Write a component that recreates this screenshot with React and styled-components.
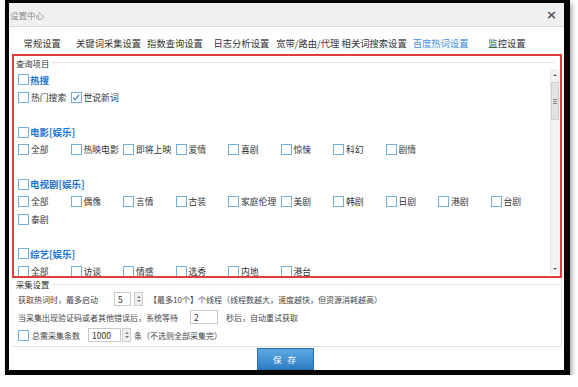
import React from 'react';
import styled, { createGlobalStyle } from 'styled-components';

const FONT = `"Noto Sans CJK SC", "Noto Sans", sans-serif`;

const Global = createGlobalStyle`
  html, body { margin: 0; padding: 0; background: #fff; }
  body { font-family: ${FONT}; color: #333; }
  * { box-sizing: border-box; }
`;

const Dialog = styled.div`
  margin-left: 5px;
  width: 565px;
  height: 375px;
  border-style: solid;
  border-color: #050505;
  border-width: 3px 6px 5px 4px;
  box-shadow: 2px 3px 5px rgba(0, 0, 0, 0.35);
  background: #fff;
  display: flex;
  flex-direction: column;
  overflow: hidden;
`;

const TitleBar = styled.div`
  height: 24px;
  flex: none;
  background: #f0f0f0;
  border-bottom: 1px solid #dcdcdc;
  display: flex;
  align-items: center;
  justify-content: space-between;
  padding: 0 7px 0 1px;
`;

const Title = styled.span`
  font-size: 8.5px;
  color: #888;
`;

const Close = styled.span`
  font-size: 13px;
  font-weight: bold;
  color: #555;
  line-height: 1;
  font-family: "DejaVu Sans", sans-serif;
`;

const TabBar = styled.div`
  height: 27px;
  flex: none;
  display: flex;
  align-items: center;
  padding-top: 4px;
`;

const Tab = styled.div`
  width: 66.4px;
  flex: none;
  text-align: center;
  white-space: nowrap;
  font-size: 9.3px;
  color: ${(p) => (p.$active ? '#3a8ee0' : '#333')};
`;

const RedPanel = styled.div`
  margin-left: 3px;
  width: 550px;
  height: 224px;
  flex: none;
  border: 2px solid #e23b3b;
  display: flex;
  flex-direction: column;
`;

const LegendRow = styled.div`
  height: ${(p) => p.$h}px;
  flex: none;
  display: flex;
  align-items: center;
  padding-left: ${(p) => p.$pl}px;
`;

const LegendText = styled.span`
  font-size: 8.3px;
  color: #333;
  white-space: nowrap;
`;

const LegendLine = styled.div`
  flex: 1;
  height: 1px;
  background: #e4e4e4;
  margin: 0 ${(p) => p.$mr}px 0 3px;
`;

const ScrollRow = styled.div`
  flex: 1;
  min-height: 0;
  display: flex;
  padding-left: 4px;
  padding-right: 1px;
`;

const Content = styled.div`
  flex: 1;
  overflow: hidden;
  padding-top: 2.3px;
`;

const Line = styled.div`
  height: 17.4px;
  display: flex;
  align-items: center;
  flex-wrap: wrap;
`;

const Items = styled.div`
  display: flex;
  flex-wrap: wrap;
`;

const Item = styled.label`
  width: 52.5px;
  height: 17.4px;
  flex: none;
  display: flex;
  align-items: center;
  font-size: 8.8px;
  color: #333;
  white-space: nowrap;
`;

const Box = styled.span`
  width: 11px;
  height: 11px;
  flex: none;
  border: 1px solid #72afdc;
  background: #fff;
  display: inline-flex;
  align-items: center;
  justify-content: center;
  margin-right: ${(p) => p.$mr ?? 2}px;
`;

const GroupTitle = styled.span`
  font-size: 9.5px;
  font-weight: bold;
  color: #2275d2;
  white-space: nowrap;
`;

const Scrollbar = styled.div`
  width: 9px;
  flex: none;
  margin-bottom: 2px;
  background: #f2f2f2;
  border-left: 1px solid #e6e6e6;
  display: flex;
  flex-direction: column;
  align-items: center;
`;

const Arrow = styled.div`
  width: 0;
  height: 0;
  border-left: 2px solid transparent;
  border-right: 2px solid transparent;
  ${(p) =>
    p.$down
      ? 'border-top: 2px solid #666; margin-bottom: 4px;'
      : 'border-bottom: 2px solid #666; margin-top: 5px;'}
`;

const Thumb = styled.div`
  width: 8px;
  height: 38px;
  margin-top: 6px;
  background: #e2e2e2;
  border: 1px solid #cfcfcf;
  display: flex;
  flex-direction: column;
  align-items: center;
  justify-content: center;
  gap: 1px;
`;

const Grip = styled.div`
  width: 4px;
  height: 1px;
  background: #888;
`;

const Spacer = styled.div`
  flex: 1;
`;

const Settings = styled.div`
  margin-left: 3px;
  width: 550px;
  height: 69px;
  flex: none;
  border-right: 1px solid #e6e6e6;
  border-bottom: 1px solid #e2e2e2;
  display: flex;
  flex-direction: column;
`;

const SetRow = styled.div`
  height: 18px;
  flex: none;
  display: flex;
  align-items: center;
  padding-left: 6px;
  font-size: 8px;
  color: #444;
  white-space: nowrap;
`;

const Text = styled.span`
  margin-left: ${(p) => p.$ml || 0}px;
`;

const Input = styled.div`
  width: ${(p) => p.$w}px;
  height: 14px;
  margin-left: ${(p) => p.$ml || 0}px;
  border: 1px solid #c9c9c9;
  background: #fff;
  font-size: 8.5px;
  color: #333;
  padding-left: 3px;
  display: flex;
  align-items: center;
`;

const Spinner = styled.div`
  width: 9px;
  height: 14px;
  margin-left: ${(p) => p.$ml || 0}px;
  border: 1px solid #cfcfcf;
  background: #efefef;
  display: flex;
  flex-direction: column;
  align-items: center;
  justify-content: center;
  gap: 2px;
`;

const Tri = styled.div`
  width: 0;
  height: 0;
  border-left: 2px solid transparent;
  border-right: 2px solid transparent;
  ${(p) => (p.$down ? 'border-top: 2px solid #777;' : 'border-bottom: 2px solid #777;')}
`;

const Footer = styled.div`
  flex: 1;
  display: flex;
  justify-content: center;
  align-items: flex-start;
  padding-top: 1px;
`;

const SaveButton = styled.button`
  width: 57px;
  height: 22px;
  margin-left: -2px;
  border: 1px solid #2b70b2;
  background: linear-gradient(#5ea9e2, #2d7dc4);
  color: #fff;
  font-family: ${FONT};
  font-size: 8.5px;
  letter-spacing: 2px;
  padding: 0;
`;

const Check = () => (
  <svg width="8" height="7" viewBox="0 0 8 7">
    <path d="M1 3.6 L3.1 5.6 L7 1" fill="none" stroke="#3b86cf" strokeWidth="1.2" />
  </svg>
);

const tabs = ['常规设置', '关键词采集设置', '指数查询设置', '日志分析设置', '宽带/路由/代理', '相关词搜索设置', '百度热词设置', '监控设置'];

const groups = [
  { title: '热搜', items: ['热门搜索', '世说新词'], checked: ['世说新词'] },
  { title: '电影[娱乐]', items: ['全部', '热映电影', '即将上映', '爱情', '喜剧', '惊悚', '科幻', '剧情'] },
  { title: '电视剧[娱乐]', items: ['全部', '偶像', '言情', '古装', '家庭伦理', '美剧', '韩剧', '日剧', '港剧', '台剧', '泰剧'] },
  { title: '综艺[娱乐]', items: ['全部', '访谈', '情感', '选秀', '内地', '港台'] },
];

const Spin = ({ ml }) => (
  <Spinner $ml={ml}>
    <Tri />
    <Tri $down />
  </Spinner>
);

export default function App() {
  return (
    <>
      <Global />
      <Dialog>
        <TitleBar>
          <Title>设置中心</Title>
          <Close>×</Close>
        </TitleBar>
        <TabBar>
          {tabs.map((t) => (
            <Tab key={t} $active={t === '百度热词设置'}>{t}</Tab>
          ))}
        </TabBar>
        <RedPanel>
          <LegendRow $h={13} $pl={2}>
            <LegendText>查询项目</LegendText>
            <LegendLine $mr={5} />
          </LegendRow>
          <ScrollRow>
            <Content>
              {groups.map((g, gi) => (
                <React.Fragment key={g.title}>
                  {gi > 0 && <Line />}
                  <Line>
                    <Box $mr={1} />
                    <GroupTitle>{g.title}</GroupTitle>
                  </Line>
                  <Items>
                    {g.items.map((it) => (
                      <Item key={it}>
                        <Box>{g.checked && g.checked.includes(it) && <Check />}</Box>
                        {it}
                      </Item>
                    ))}
                  </Items>
                </React.Fragment>
              ))}
            </Content>
            <Scrollbar>
              <Arrow />
              <Thumb>
                <Grip />
                <Grip />
                <Grip />
              </Thumb>
              <Spacer />
              <Arrow $down />
            </Scrollbar>
          </ScrollRow>
        </RedPanel>
        <Settings>
          <LegendRow $h={12} $pl={4}>
            <LegendText>采集设置</LegendText>
            <LegendLine $mr={0} />
          </LegendRow>
          <SetRow>
            <Text>获取热词时，最多启动</Text>
            <Input $w={17} $ml={16}>5</Input>
            <Spin ml={3} />
            <Text $ml={6}>【最多10个】个线程（线程数越大，速度越快，但资源消耗越高）</Text>
          </SetRow>
          <SetRow>
            <Text>当采集出现验证码或者其他错误后，系统等待</Text>
            <Input $w={28} $ml={12}>2</Input>
            <Text $ml={8}>秒后，自动重试获取</Text>
          </SetRow>
          <SetRow>
            <Box $mr={3} />
            <Text>总需采集条数</Text>
            <Input $w={33} $ml={8}>1000</Input>
            <Spin ml={1} />
            <Text $ml={3}>条（不选则全部采集完）</Text>
          </SetRow>
        </Settings>
        <Footer>
          <SaveButton>保 存</SaveButton>
        </Footer>
      </Dialog>
    </>
  );
}
